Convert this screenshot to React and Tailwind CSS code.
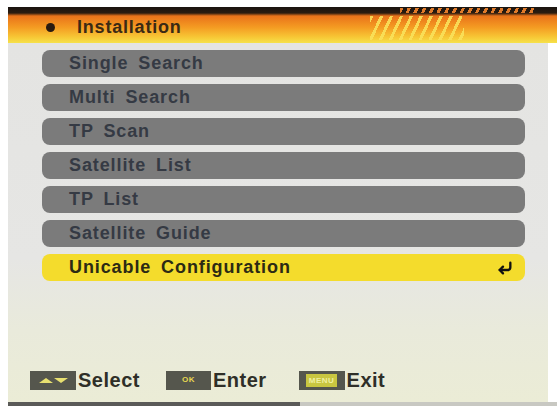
import { CornerDownLeft } from 'lucide-react';

const ITEMS = [
  'Single Search',
  'Multi Search',
  'TP Scan',
  'Satellite List',
  'TP List',
  'Satellite Guide',
  'Unicable Configuration',
];

const SELECTED = 6;

const App = () => {
  return (
    <div className="relative h-[406px] w-[557px] overflow-hidden bg-white font-['Liberation_Sans',Arial,sans-serif]">
      {/* Title bar */}
      <div className="relative ml-[8px] mt-[7px] h-[36px] bg-[linear-gradient(180deg,#1a1410_0px,#2a1c10_6px,#e9731a_9px,#f49a22_20px,#f7c735_30px,#f6e24a_36px)]">
        <div className="flex h-full items-center pl-[38px] pt-[4px]">
          <span className="h-[9px] w-[9px] rounded-full bg-[#2a1a10]" />
          <span className="ml-[22px] text-[18px] font-bold tracking-[0.8px] text-[#3b2a14]">
            Installation
          </span>
        </div>
        {/* decorative hatching */}
        <div className="absolute left-[392px] top-[1px] h-[5px] w-[135px] bg-[repeating-linear-gradient(115deg,#e07a2a_0px,#e07a2a_3px,transparent_3px,transparent_7px)]" />
        <div className="absolute left-[362px] top-[9px] h-[24px] w-[94px] bg-[repeating-linear-gradient(115deg,#f9e15a_0px,#f9e15a_3px,transparent_3px,transparent_9px)] opacity-90" />
      </div>

      {/* Body */}
      <div className="ml-[8px] flex h-[359px] w-[540px] flex-col bg-[linear-gradient(180deg,#e4e4e2_0%,#e6e6e4_60%,#e9eadb_80%,#ebecd6_100%)]">
        <div className="flex flex-col gap-[7px] pl-[34px] pr-[23px] pt-[7px]">
          {ITEMS.map((label, i) => (
            <div
              key={label}
              className={`flex h-[27px] items-center justify-between rounded-[8px] pl-[27px] pr-[12px] text-[18px] font-bold tracking-[0.9px] [word-spacing:4px] ${
                i === SELECTED
                  ? 'bg-[#f4dc2c] text-[#2c2a14]'
                  : 'bg-[#7b7b7b] text-[#353a44]'
              }`}
            >
              <span>{label}</span>
              {i === SELECTED && (
                <CornerDownLeft className="h-[16px] w-[16px] text-[#111]" strokeWidth={3.5} />
              )}
            </div>
          ))}
        </div>

        {/* Footer hints */}
        <div className="mt-auto mb-[7px] flex items-center pl-[22px] text-[20px] font-bold tracking-[0.5px] text-[#2f2f28]">
          <div className="flex h-[19px] w-[46px] items-center justify-center gap-[1px] bg-[#55564d]">
            <span className="h-0 w-0 border-x-[7px] border-b-[5px] border-x-transparent border-b-[#e8e070]" />
            <span className="h-0 w-0 border-x-[7px] border-t-[5px] border-x-transparent border-t-[#e8e070]" />
          </div>
          <span className="ml-[2px]">Select</span>
          <div className="ml-[26px] flex h-[19px] w-[45px] items-center justify-center bg-[#55564d]">
            <span className="text-[8px] leading-none text-[#e8d850]">OK</span>
          </div>
          <span className="ml-[2px]">Enter</span>
          <div className="ml-[32px] flex h-[19px] w-[46px] items-center justify-center bg-[#55564d]">
            <span className="bg-[#c9c640] px-[3px] text-[8px] leading-[13px] text-[#f0f0a0]">MENU</span>
          </div>
          <span className="ml-[2px]">Exit</span>
        </div>
      </div>

      {/* Bottom strip */}
      <div className="ml-[8px] flex h-[4px]">
        <div className="h-full w-[292px] bg-[#5a5a58]" />
        <div className="h-full flex-1 bg-[#c8c8c2]" />
      </div>
    </div>
  );
};

export default App;
